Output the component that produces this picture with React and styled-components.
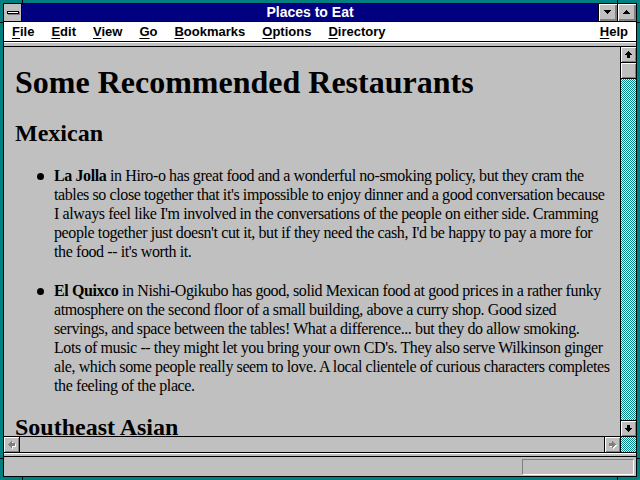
import React from 'react'
import styled, { createGlobalStyle } from 'styled-components'

const GlobalStyle = createGlobalStyle`
  html, body {
    margin: 0;
    padding: 0;
    width: 640px;
    height: 480px;
    overflow: hidden;
    background: #008080;
  }
`

const Frame = styled.div`
  position: relative;
  width: 640px;
  height: 480px;
  box-sizing: border-box;
  padding: 3px;
  background: #008080;
`

const Tick = styled.div`
  position: absolute;
  background: #000;
  ${(p) => p.v ? 'width: 1px; height: 3px;' : 'width: 3px; height: 1px;'}
`

const Window = styled.div`
  height: 100%;
  box-sizing: border-box;
  border: 1px solid #000;
  display: flex;
  flex-direction: column;
  background: #c0c0c0;
`

const TitleBar = styled.div`
  display: flex;
  height: 17px;
  border-bottom: 1px solid #000;
  background: #000080;
`

const SysBox = styled.div`
  width: 17px;
  height: 17px;
  border-right: 1px solid #000;
  background: #c0c0c0;
  display: flex;
  align-items: center;
  justify-content: center;
`

const Title = styled.div`
  flex: 1;
  text-align: center;
  color: #fff;
  font: bold 14px/17px "Liberation Sans", Arial, sans-serif;
`

const TitleBtn = styled.div`
  width: 18px;
  height: 17px;
  border-left: 1px solid #000;
  background: #c0c0c0;
  box-shadow: inset 1px 1px #fff, inset -1px -1px #808080, inset -2px -2px #808080;
  display: flex;
  align-items: center;
  justify-content: center;
`

const MenuBar = styled.div`
  display: flex;
  gap: 17px;
  height: 19px;
  padding: 0 8px;
  border-bottom: 1px solid #000;
  background: #fff;
  font: bold 13px/19px "Liberation Sans", Arial, sans-serif;
  color: #000;
`

const MenuItem = styled.span`
  margin-left: ${(p) => p.right ? 'auto' : '0'};
  white-space: nowrap;
  u {
    text-decoration: underline;
    text-underline-offset: 2px;
  }
`

const Strip = styled.div`
  height: 3px;
  border-top: 1px solid #fff;
  border-bottom: 1px solid #000;
  background: #c0c0c0;
`

const Body = styled.div`
  display: flex;
  height: 406px;
`

const LeftCol = styled.div`
  flex: 1;
  display: flex;
  flex-direction: column;
  min-width: 0;
`

const Content = styled.div`
  height: 389px;
  overflow: hidden;
  padding-left: 11px;
  color: #000;
  font-family: "Liberation Serif", "Times New Roman", serif;
`

const H1 = styled.h1`
  margin: 17px 0 0;
  font-size: 32px;
  line-height: 36px;
  font-weight: bold;
  white-space: nowrap;
`

const H2 = styled.h2`
  margin: ${(p) => p.top}px 0 0;
  font-size: 24px;
  line-height: 28px;
  font-weight: bold;
  white-space: nowrap;
`

const List = styled.ul`
  list-style: none;
  margin: 19px 0 0;
  padding: 0 0 0 22px;
  display: flex;
  flex-direction: column;
  gap: 20px;
`

const Item = styled.li`
  display: flex;
  gap: 10px;
`

const Bullet = styled.span`
  flex: none;
  width: 7px;
  height: 7px;
  margin-top: 7px;
  border-radius: 50%;
  background: #000;
`

const Para = styled.div`
  font-size: 16px;
  line-height: 19px;
  letter-spacing: -0.4px;
  white-space: nowrap;
`

const HScroll = styled.div`
  display: flex;
  height: 15px;
  border-top: 1px solid #000;
  border-bottom: 1px solid #000;
  background: #c0c0c0;
`

const HTrack = styled.div`
  flex: 1;
`

const ScrollBtn = styled.div`
  flex: none;
  width: 15px;
  height: 15px;
  background: #c0c0c0;
  box-shadow: inset 1px 1px #fff, inset -1px -1px #808080;
  ${(p) => p.edge === 'right' && 'border-right: 1px solid #000;'}
  ${(p) => p.edge === 'left' && 'border-left: 1px solid #000;'}
  ${(p) => p.edge === 'bottom' && 'border-bottom: 1px solid #000;'}
  ${(p) => p.edge === 'both' && 'border-top: 1px solid #000; border-bottom: 1px solid #000;'}
  display: flex;
  align-items: center;
  justify-content: center;
`

const VScroll = styled.div`
  width: 15px;
  border-left: 1px solid #000;
  display: flex;
  flex-direction: column;
`

const Dither = styled.div`
  flex: ${(p) => p.grow ? 1 : 'none'};
  height: ${(p) => p.grow ? 'auto' : '15px'};
  border-bottom: ${(p) => p.grow ? 'none' : '1px solid #000'};
  background: #fff;
  overflow: hidden;
  svg { display: block; }
`

const Checker = ({ id }) => (
  <svg width="15" height="100%" shapeRendering="crispEdges">
    <defs>
      <pattern id={id} width="2" height="2" patternUnits="userSpaceOnUse">
        <rect x="0" y="0" width="1" height="1" fill="#008c8c" />
        <rect x="1" y="1" width="1" height="1" fill="#008c8c" />
      </pattern>
    </defs>
    <rect width="100%" height="100%" fill={`url(#${id})`} />
  </svg>
)

const Sep = styled.div`
  height: 2px;
  border-top: 1px solid #fff;
  border-bottom: 1px solid #000;
`

const StatusBar = styled.div`
  height: 19px;
  box-sizing: border-box;
  padding: 2px 2px 1px 0;
  display: flex;
  justify-content: flex-end;
  background: #c0c0c0;
`

const StatusField = styled.div`
  width: 110px;
  height: 14px;
  border-top: 1px solid #808080;
  border-left: 1px solid #808080;
  border-bottom: 1px solid #fff;
  border-right: 1px solid #fff;
`

const Px = ({ rows, fill }) => (
  <>
    {rows.map(([x, y, w, h], i) => (
      <rect key={i} x={x} y={y} width={w} height={h} fill={fill} />
    ))}
  </>
)

const upRows = [[7, 4, 1, 1], [6, 5, 3, 1], [5, 6, 5, 1], [4, 7, 7, 1], [6, 8, 3, 3]]
const downRows = [[6, 4, 3, 3], [4, 7, 7, 1], [5, 8, 5, 1], [6, 9, 3, 1], [7, 10, 1, 1]]
const leftRows = [[4, 7, 1, 1], [5, 6, 1, 3], [6, 5, 1, 5], [7, 4, 1, 7], [8, 6, 3, 3]]
const rightRows = [[4, 6, 3, 3], [7, 4, 1, 7], [8, 5, 1, 5], [9, 6, 1, 3], [10, 7, 1, 1]]

const Arrow = ({ rows, disabled }) => (
  <svg width="15" height="15" viewBox="0 0 15 15" shapeRendering="crispEdges">
    {disabled && (
      <g transform="translate(1,1)">
        <Px rows={rows} fill="#fff" />
      </g>
    )}
    <Px rows={rows} fill={disabled ? '#808080' : '#000'} />
  </svg>
)

const Tri = ({ up }) => (
  <svg width="18" height="17" viewBox="0 0 18 17" shapeRendering="crispEdges">
    <Px
      fill="#000"
      rows={up
        ? [[8, 6, 1, 1], [7, 7, 3, 1], [6, 8, 5, 1], [5, 9, 7, 1]]
        : [[5, 6, 7, 1], [6, 7, 5, 1], [7, 8, 3, 1], [8, 9, 1, 1]]}
    />
  </svg>
)

const SysIcon = () => (
  <svg width="17" height="17" viewBox="0 0 17 17" shapeRendering="crispEdges">
    <rect x="4" y="8" width="12" height="3" fill="#808080" />
    <rect x="3" y="7" width="12" height="3" fill="#000" />
    <rect x="4" y="8" width="10" height="1" fill="#fff" />
  </svg>
)

const menus = [
  ['F', 'ile'], ['E', 'dit'], ['V', 'iew'], ['G', 'o'], ['B', 'ookmarks'],
  ['O', 'ptions'], ['D', 'irectory'],
]

const restaurants = [
  {
    name: 'La Jolla',
    lines: [
      ' in Hiro-o has great food and a wonderful no-smoking policy, but they cram the',
      "tables so close together that it's impossible to enjoy dinner and a good conversation because",
      "I always feel like I'm involved in the conversations of the people on either side. Cramming",
      "people together just doesn't cut it, but if they need the cash, I'd be happy to pay a more for",
      "the food -- it's worth it.",
    ],
  },
  {
    name: 'El Quixco',
    lines: [
      ' in Nishi-Ogikubo has good, solid Mexican food at good prices in a rather funky',
      'atmosphere on the second floor of a small building, above a curry shop. Good sized',
      'servings, and space between the tables! What a difference... but they do allow smoking.',
      "Lots of music -- they might let you bring your own CD's. They also serve Wilkinson ginger",
      'ale, which some people really seem to love. A local clientele of curious characters completes',
      'the feeling of the place.',
    ],
  },
]

const App = () => (
  <Frame>
    <GlobalStyle />
    <Tick v style={{ left: 22, top: 0 }} />
    <Tick v style={{ left: 617, top: 0 }} />
    <Tick v style={{ left: 22, top: 477 }} />
    <Tick v style={{ left: 617, top: 477 }} />
    <Tick style={{ left: 0, top: 22 }} />
    <Tick style={{ left: 637, top: 22 }} />
    <Tick style={{ left: 0, top: 458 }} />
    <Tick style={{ left: 637, top: 458 }} />
    <Window>
      <TitleBar>
        <SysBox><SysIcon /></SysBox>
        <Title>Places to Eat</Title>
        <TitleBtn><Tri /></TitleBtn>
        <TitleBtn><Tri up /></TitleBtn>
      </TitleBar>
      <MenuBar>
        {menus.map(([k, rest]) => (
          <MenuItem key={k + rest}><u>{k}</u>{rest}</MenuItem>
        ))}
        <MenuItem right><u>H</u>elp</MenuItem>
      </MenuBar>
      <Strip />
      <Body>
        <LeftCol>
          <Content>
            <H1>Some Recommended Restaurants</H1>
            <H2 top={19}>Mexican</H2>
            <List>
              {restaurants.map((r) => (
                <Item key={r.name}>
                  <Bullet />
                  <Para>
                    {r.lines.map((line, i) => (
                      <div key={i}>
                        {i === 0 && <b>{r.name}</b>}
                        {line}
                      </div>
                    ))}
                  </Para>
                </Item>
              ))}
            </List>
            <H2 top={18}>Southeast Asian</H2>
          </Content>
          <HScroll>
            <ScrollBtn edge="right"><Arrow rows={leftRows} disabled /></ScrollBtn>
            <HTrack />
            <ScrollBtn edge="left"><Arrow rows={rightRows} disabled /></ScrollBtn>
          </HScroll>
        </LeftCol>
        <VScroll>
          <ScrollBtn edge="bottom"><Arrow rows={upRows} /></ScrollBtn>
          <ScrollBtn edge="bottom" />
          <Dither grow><Checker id="trackDither" /></Dither>
          <ScrollBtn edge="both"><Arrow rows={downRows} /></ScrollBtn>
          <Dither><Checker id="cornerDither" /></Dither>
        </VScroll>
      </Body>
      <Sep />
      <StatusBar>
        <StatusField />
      </StatusBar>
    </Window>
  </Frame>
)

export default App
